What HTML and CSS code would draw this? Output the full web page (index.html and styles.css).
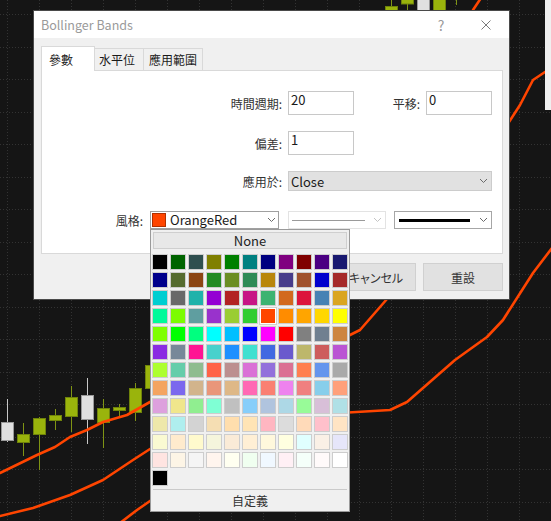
FILE: index.html
```html
<!DOCTYPE html>
<html lang="zh-Hant">
<head>
<meta charset="utf-8">
<title>Bollinger Bands</title>
<link rel="stylesheet" href="styles.css">
</head>
<body>
<div class="screen">
  <svg class="chart" width="551" height="521" viewBox="0 0 551 521">
    <g class="grid">
      <line x1="7.5" y1="0" x2="7.5" y2="521"/><line x1="39.5" y1="0" x2="39.5" y2="521"/>
      <line x1="71.5" y1="0" x2="71.5" y2="521"/><line x1="103.5" y1="0" x2="103.5" y2="521"/>
      <line x1="135.5" y1="0" x2="135.5" y2="521"/><line x1="167.5" y1="0" x2="167.5" y2="521"/>
      <line x1="199.5" y1="0" x2="199.5" y2="521"/><line x1="231.5" y1="0" x2="231.5" y2="521"/>
      <line x1="263.5" y1="0" x2="263.5" y2="521"/><line x1="295.5" y1="0" x2="295.5" y2="521"/>
      <line x1="327.5" y1="0" x2="327.5" y2="521"/><line x1="359.5" y1="0" x2="359.5" y2="521"/>
      <line x1="391.5" y1="0" x2="391.5" y2="521"/><line x1="423.5" y1="0" x2="423.5" y2="521"/>
      <line x1="455.5" y1="0" x2="455.5" y2="521"/><line x1="487.5" y1="0" x2="487.5" y2="521"/>
      <line x1="519.5" y1="0" x2="519.5" y2="521"/>
      <line x1="0" y1="14.5" x2="551" y2="14.5"/><line x1="0" y1="47.5" x2="551" y2="47.5"/>
      <line x1="0" y1="79.5" x2="551" y2="79.5"/><line x1="0" y1="112.5" x2="551" y2="112.5"/>
      <line x1="0" y1="144.5" x2="551" y2="144.5"/><line x1="0" y1="177.5" x2="551" y2="177.5"/>
      <line x1="0" y1="209.5" x2="551" y2="209.5"/><line x1="0" y1="242.5" x2="551" y2="242.5"/>
      <line x1="0" y1="274.5" x2="551" y2="274.5"/><line x1="0" y1="307.5" x2="551" y2="307.5"/>
      <line x1="0" y1="339.5" x2="551" y2="339.5"/><line x1="0" y1="372.5" x2="551" y2="372.5"/>
      <line x1="0" y1="404.5" x2="551" y2="404.5"/><line x1="0" y1="437.5" x2="551" y2="437.5"/>
      <line x1="0" y1="469.5" x2="551" y2="469.5"/><line x1="0" y1="502.5" x2="551" y2="502.5"/>
    </g>
    <g class="wick-white">
      <line x1="7.5" y1="399" x2="7.5" y2="442"/>
      <line x1="87.5" y1="378" x2="87.5" y2="444"/>
      <line x1="423.5" y1="0" x2="423.5" y2="12"/>
    </g>
    <g class="wick-green">
      <line x1="23.5" y1="423" x2="23.5" y2="456"/>
      <line x1="39.5" y1="417" x2="39.5" y2="470"/>
      <line x1="55.5" y1="409" x2="55.5" y2="430"/>
      <line x1="71.5" y1="386" x2="71.5" y2="432"/>
      <line x1="103.5" y1="399" x2="103.5" y2="448"/>
      <line x1="119.5" y1="404" x2="119.5" y2="416"/>
      <line x1="135.5" y1="383" x2="135.5" y2="421"/>
      <line x1="151.5" y1="358" x2="151.5" y2="394"/>
      <line x1="391.5" y1="0" x2="391.5" y2="12"/>
      <line x1="407.5" y1="0" x2="407.5" y2="12"/>
      <line x1="439.5" y1="0" x2="439.5" y2="12"/>
      <line x1="456.5" y1="0" x2="456.5" y2="5"/>
    </g>
    <g class="body-white">
      <rect x="1.5" y="422.5" width="12" height="18"/>
      <rect x="81.5" y="395.5" width="12" height="24"/>
      <rect x="417.5" y="-2" width="12" height="14"/>
    </g>
    <g class="body-green">
      <rect x="17.5" y="434.5" width="12" height="8"/>
      <rect x="33.5" y="418.5" width="12" height="16"/>
      <rect x="49.5" y="415.5" width="12" height="5"/>
      <rect x="65.5" y="397.5" width="12" height="19"/>
      <rect x="97.5" y="408.5" width="12" height="14"/>
      <rect x="113.5" y="407.5" width="12" height="3"/>
      <rect x="129.5" y="388.5" width="12" height="24"/>
      <rect x="145.5" y="365.5" width="12" height="23"/>
      <rect x="385.5" y="6.5" width="12" height="8"/>
      <rect x="401.5" y="-2" width="12" height="6"/>
      <rect x="433.5" y="-2" width="12" height="14"/>
    </g>
    <g class="band">
      <polyline points="0,473 37,455 55,447 70,437 87,430 103,422 127,415 150,402 200,380 250,350 300,320 345,296 400,220 450,100 473,10 481,-2"/>
      <polyline points="0,516 33,508 70,495 103,480 133,460 150,449 250,390 340,340 360,330 387,299 450,200 509,122 520,105 533,80 545,72 552,70"/>
      <polyline points="120,523 137,510 150,501 250,460 340,413 390,410 407,402 455,360 487,337 503,320 533,273 552,248"/>
    </g>
  </svg>

  <div class="side-panel"></div>

  <div class="dialog">
    <div class="titlebar">
      <span class="title">Bollinger Bands</span>
      <span class="help">?</span>
      <svg class="close-icon" width="10" height="10" viewBox="0 0 10 10">
        <path d="M0.5 0.5 L9.5 9.5 M9.5 0.5 L0.5 9.5"/>
      </svg>
    </div>
    <div class="dialog-body">
      <div class="tabs">
        <div class="tab active">參數</div>
        <div class="tab tab-levels">水平位</div>
        <div class="tab tab-apply">應用範圍</div>
      </div>
      <div class="panel">
        <div class="form-grid">
          <span class="lbl">時間週期:</span>
          <div class="input">20</div>
          <span class="lbl">平移:</span>
          <div class="input">0</div>
          <span class="lbl">偏差:</span>
          <div class="input">1</div>
          <span></span>
          <span></span>
          <span class="lbl">應用於:</span>
          <div class="select">
            <span>Close</span>
            <svg class="chev" width="7" height="4" viewBox="0 0 7 4"><polyline points="0,0 3.5,3.5 7,0"/></svg>
          </div>
        </div>
        <div class="style-row">
          <span class="lbl style-lbl">風格:</span>
          <div class="combo color-combo">
            <span class="swatch"></span>
            <span class="combo-text">OrangeRed</span>
            <svg class="chev" width="7" height="4" viewBox="0 0 7 4"><polyline points="0,0 3.5,3.5 7,0"/></svg>
            <div class="popup">
              <div class="none-btn">None</div>
              <div class="palette">
                <i style="background:#000000"></i><i style="background:#006400"></i><i style="background:#2F4F4F"></i><i style="background:#808000"></i><i style="background:#008000"></i><i style="background:#008080"></i><i style="background:#000080"></i><i style="background:#800080"></i><i style="background:#800000"></i><i style="background:#4B0082"></i><i style="background:#191970"></i>
                <i style="background:#00008B"></i><i style="background:#556B2F"></i><i style="background:#8B4513"></i><i style="background:#228B22"></i><i style="background:#6B8E23"></i><i style="background:#2E8B57"></i><i style="background:#B8860B"></i><i style="background:#483D8B"></i><i style="background:#A0522D"></i><i style="background:#0000CD"></i><i style="background:#A52A2A"></i>
                <i style="background:#00CED1"></i><i style="background:#696969"></i><i style="background:#20B2AA"></i><i style="background:#9400D3"></i><i style="background:#B22222"></i><i style="background:#C71585"></i><i style="background:#3CB371"></i><i style="background:#D2691E"></i><i style="background:#DC143C"></i><i style="background:#4682B4"></i><i style="background:#DAA520"></i>
                <i style="background:#00FA9A"></i><i style="background:#7CFC00"></i><i style="background:#5F9EA0"></i><i style="background:#9932CC"></i><i style="background:#9ACD32"></i><i style="background:#32CD32"></i><i class="sel" style="background:#FF4500"></i><i style="background:#FF8C00"></i><i style="background:#FFA500"></i><i style="background:#FFD700"></i><i style="background:#FFFF00"></i>
                <i style="background:#7FFF00"></i><i style="background:#00FF00"></i><i style="background:#00FF7F"></i><i style="background:#00FFFF"></i><i style="background:#00BFFF"></i><i style="background:#0000FF"></i><i style="background:#FF00FF"></i><i style="background:#FF0000"></i><i style="background:#808080"></i><i style="background:#708090"></i><i style="background:#CD853F"></i>
                <i style="background:#8A2BE2"></i><i style="background:#778899"></i><i style="background:#FF1493"></i><i style="background:#48D1CC"></i><i style="background:#1E90FF"></i><i style="background:#40E0D0"></i><i style="background:#4169E1"></i><i style="background:#6A5ACD"></i><i style="background:#BDB76B"></i><i style="background:#CD5C5C"></i><i style="background:#BA55D3"></i>
                <i style="background:#ADFF2F"></i><i style="background:#66CDAA"></i><i style="background:#8FBC8F"></i><i style="background:#FF6347"></i><i style="background:#BC8F8F"></i><i style="background:#DA70D6"></i><i style="background:#9370DB"></i><i style="background:#DB7093"></i><i style="background:#FF7F50"></i><i style="background:#6495ED"></i><i style="background:#A9A9A9"></i>
                <i style="background:#F4A460"></i><i style="background:#7B68EE"></i><i style="background:#D2B48C"></i><i style="background:#E9967A"></i><i style="background:#DEB887"></i><i style="background:#FF69B4"></i><i style="background:#FA8072"></i><i style="background:#EE82EE"></i><i style="background:#F08080"></i><i style="background:#87CEEB"></i><i style="background:#FFA07A"></i>
                <i style="background:#DDA0DD"></i><i style="background:#F0E68C"></i><i style="background:#90EE90"></i><i style="background:#7FFFD4"></i><i style="background:#C0C0C0"></i><i style="background:#87CEFA"></i><i style="background:#B0C4DE"></i><i style="background:#ADD8E6"></i><i style="background:#98FB98"></i><i style="background:#D8BFD8"></i><i style="background:#B0E0E6"></i>
                <i style="background:#EEE8AA"></i><i style="background:#AFEEEE"></i><i style="background:#D3D3D3"></i><i style="background:#F5DEB3"></i><i style="background:#FFDEAD"></i><i style="background:#FFE4B5"></i><i style="background:#FFB6C1"></i><i style="background:#DCDCDC"></i><i style="background:#FFDAB9"></i><i style="background:#FFC0CB"></i><i style="background:#FFE4C4"></i>
                <i style="background:#FAFAD2"></i><i style="background:#FFEBCD"></i><i style="background:#FFFACD"></i><i style="background:#F5F5DC"></i><i style="background:#FAEBD7"></i><i style="background:#FFEFD5"></i><i style="background:#FFF8DC"></i><i style="background:#FFFFE0"></i><i style="background:#E0FFFF"></i><i style="background:#FAF0E6"></i><i style="background:#E6E6FA"></i>
                <i style="background:#FFE4E1"></i><i style="background:#FDF5E6"></i><i style="background:#F5F5F5"></i><i style="background:#FFF5EE"></i><i style="background:#FFFFF0"></i><i style="background:#F0FFF0"></i><i style="background:#F0F8FF"></i><i style="background:#FFF0F5"></i><i style="background:#F5FFFA"></i><i style="background:#FFFAFA"></i><i style="background:#FFFFFF"></i>
                <i style="background:#000000"></i>
              </div>
              <div class="sep"></div>
              <div class="custom">自定義</div>
            </div>
          </div>
          <div class="combo line-combo disabled">
            <span class="line thin"></span>
            <svg class="chev" width="7" height="4" viewBox="0 0 7 4"><polyline points="0,0 3.5,3.5 7,0"/></svg>
          </div>
          <div class="combo line-combo">
            <span class="line thick"></span>
            <svg class="chev" width="7" height="4" viewBox="0 0 7 4"><polyline points="0,0 3.5,3.5 7,0"/></svg>
          </div>
        </div>
      </div>
      <div class="buttons">
        <div class="btn">確定</div>
        <div class="btn btn-ja">キャンセル</div>
        <div class="btn">重設</div>
      </div>
    </div>
  </div>
</div>
</body>
</html>
```

FILE: styles.css
```css
* { box-sizing: border-box; }

html, body {
  margin: 0;
  padding: 0;
}

body {
  width: 551px;
  height: 521px;
  overflow: hidden;
  background: #151515;
  font-family: "Noto Sans CJK TC", "Noto Sans", sans-serif;
  font-size: 12px;
  color: #333;
}

.screen {
  position: relative;
  width: 551px;
  height: 521px;
}

/* chart canvas */
.chart {
  position: absolute;
  left: 0;
  top: 0;
  display: block;
}

.grid line {
  stroke: #333;
  stroke-width: 1;
  stroke-dasharray: 1 2;
}

.wick-white line { stroke: #c8c8c8; stroke-width: 1; }
.wick-green line { stroke: #7f9414; stroke-width: 1; }
.body-white rect { fill: #e0e0e0; stroke: #9a9a9a; stroke-width: 1; }
.body-green rect { fill: #9ab40c; stroke: #6f830a; stroke-width: 1; }

.band polyline {
  fill: none;
  stroke: #ff4500;
  stroke-width: 2.6;
  stroke-linejoin: round;
  stroke-linecap: round;
}

.side-panel {
  position: absolute;
  left: 545px;
  top: 0;
  width: 6px;
  height: 110px;
  background: #f0f0f0;
}

/* dialog window */
.dialog {
  position: absolute;
  left: 33px;
  top: 10px;
  width: 477px;
  height: 290px;
  border: 1px solid #4a4a4a;
  background: #f0f0f0;
  display: flex;
  flex-direction: column;
}

.titlebar {
  height: 27px;
  background: #fff;
  display: flex;
  align-items: center;
  padding-left: 7px;
}

.title {
  flex: 1;
  font-size: 12.5px;
  color: #9a9a9a;
}

.help {
  width: 12px;
  text-align: center;
  color: #9a9a9a;
  font-size: 14px;
  margin-right: 34px;
}

.close-icon {
  display: block;
  margin-right: 18px;
}

.close-icon path {
  stroke: #7a7a7a;
  stroke-width: 1;
  fill: none;
}

.dialog-body {
  flex: 1;
  padding: 8px 6px 0 7px;
  display: flex;
  flex-direction: column;
}

.tabs {
  display: flex;
  align-items: flex-end;
  height: 24px;
}

.tab {
  height: 22px;
  border: 1px solid #d9d9d9;
  border-left: none;
  border-bottom: none;
  background: #f0f0f0;
  display: flex;
  align-items: center;
  padding-left: 4px;
  color: #1a1a1a;
}

.tab.active {
  width: 54px;
  height: 25px;
  margin-bottom: -1px;
  border-left: 1px solid #d9d9d9;
  background: #fff;
  position: relative;
  z-index: 1;
  padding-left: 7px;
}

.tab-levels { width: 49px; }
.tab-apply { width: 59px; padding-left: 5px; }

.panel {
  height: 184px;
  background: #fff;
  border: 1px solid #d9d9d9;
  padding: 20px 10px 0 0;
}

.form-grid {
  display: grid;
  grid-template-columns: 1fr 66px 60px 66px;
  grid-template-rows: 24px 24px 20px;
  column-gap: 6px;
  row-gap: 16px;
}

.lbl {
  display: flex;
  align-items: center;
  justify-content: flex-end;
  color: #333;
  white-space: nowrap;
}

.input {
  border: 1px solid #c8c8c8;
  background: #fff;
  font-size: 13px;
  line-height: 16px;
  padding: 0 2px;
  color: #1a1a1a;
}

.select {
  grid-column: 2 / 5;
  background: #e1e1e1;
  border: 1px solid #cccccc;
  display: flex;
  align-items: center;
  justify-content: space-between;
  padding: 0 4px 0 2px;
  font-size: 13px;
  color: #1a1a1a;
}

.chev {
  display: block;
  flex: none;
}

.chev polyline {
  fill: none;
  stroke: #6a6a6a;
  stroke-width: 1;
}

.style-row {
  margin-top: 20px;
  height: 18px;
  display: flex;
  justify-content: flex-end;
  align-items: center;
}

.style-lbl {
  margin-right: 7px;
}

.combo {
  height: 18px;
  background: #fff;
  display: flex;
  align-items: center;
}

.color-combo {
  position: relative;
  width: 129px;
  border: 1px solid #a0a0a0;
  margin-right: 9px;
  padding-right: 3px;
}

.swatch {
  width: 14px;
  height: 14px;
  margin-left: 1px;
  background: #ff4500;
  border: 1px solid #b03000;
}

.combo-text {
  flex: 1;
  margin-left: 4px;
  font-size: 13px;
  color: #1a1a1a;
  line-height: 16px;
}

.line-combo {
  width: 98px;
  border: 1px solid #a6a6a6;
  justify-content: space-between;
  padding: 0 4px;
}

.line-combo.disabled {
  border-color: #e3e3e3;
  margin-right: 8px;
  padding-left: 3px;
}

.line-combo.disabled .chev polyline {
  stroke: #c4c4c4;
}

.line {
  display: block;
}

.line.thin {
  width: 73px;
  height: 1px;
  background: #9a9a9a;
}

.line.thick {
  width: 71px;
  height: 3px;
  background: #000;
}

/* colour drop-down */
.popup {
  position: absolute;
  left: -1px;
  top: 17px;
  width: 200px;
  height: 283px;
  border: 1px solid #9a9a9a;
  background: #f0f0f0;
  z-index: 5;
  display: flex;
  flex-direction: column;
}

.none-btn {
  height: 17px;
  margin: 2px 2px 0 2px;
  border: 1px solid #cfcfcf;
  background: #e8e8e8;
  display: flex;
  align-items: center;
  justify-content: center;
  font-size: 13px;
  color: #222;
}

.palette {
  margin: 5px 0 0 1px;
  display: grid;
  grid-template-columns: repeat(11, 16px);
  grid-auto-rows: 16px;
  gap: 2px;
}

.palette i {
  display: block;
  border: 1px solid #cdcdcd;
}

.palette i.sel {
  border-color: #ffffff;
  box-shadow: 0 0 0 1px #d0d0d0;
}

.sep {
  height: 1px;
  margin: 3px 2px 0 2px;
  background: #cacaca;
}

.custom {
  flex: 1;
  display: flex;
  align-items: center;
  justify-content: center;
  color: #333;
}

.buttons {
  margin-top: 9px;
  display: flex;
  justify-content: flex-end;
  gap: 7px;
}

.btn {
  width: 80px;
  height: 28px;
  border: 1px solid #d0d0d0;
  background: #e1e1e1;
  display: flex;
  align-items: center;
  justify-content: center;
  color: #333;
}

.btn-ja {
  font-family: "Noto Sans CJK JP", sans-serif;
  font-feature-settings: "palt";
}
```
